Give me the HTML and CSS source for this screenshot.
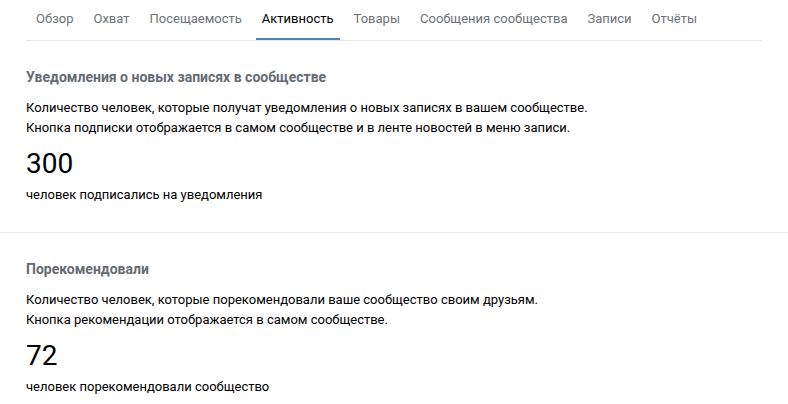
FILE: index.html
```html
<!DOCTYPE html>
<html>
<head>
<meta charset="UTF-8">
<title>Статистика сообщества</title>
<link rel="stylesheet" href="styles.css">
</head>
<body>
<div class="stats">
	<ul class="stats-tabs">
		<li class="stats-tab">Обзор</li>
		<li class="stats-tab">Охват</li>
		<li class="stats-tab">Посещаемость</li>
		<li class="stats-tab stats-tab_active">Активность</li>
		<li class="stats-tab">Товары</li>
		<li class="stats-tab">Сообщения сообщества</li>
		<li class="stats-tab">Записи</li>
		<li class="stats-tab">Отчёты</li>
	</ul>

	<div class="stats-block">
		<h2 class="stats-block-title">Уведомления о новых записях в сообществе</h2>
		<p class="stats-block-desc">Количество человек, которые получат уведомления о новых записях в вашем сообществе.<br>Кнопка подписки отображается в самом сообществе и в ленте новостей в меню записи.</p>
		<p class="stats-block-num">300</p>
		<p class="stats-block-caption">человек подписались на уведомления</p>
	</div>

	<div class="stats-block">
		<h2 class="stats-block-title">Порекомендовали</h2>
		<p class="stats-block-desc">Количество человек, которые порекомендовали ваше сообщество своим друзьям.<br>Кнопка рекомендации отображается в самом сообществе.</p>
		<p class="stats-block-num">72</p>
		<p class="stats-block-caption">человек порекомендовали сообщество</p>
	</div>
</div>
</body>
</html>
```

FILE: styles.css
```css
*{
	padding: 0;
	margin: 0;
}
body {
	background: #fff;
	font-family: Roboto, "Open Sans", sans-serif;
	font-size: 13px;
	color: #000;
}
.stats-tabs {
	list-style: none;
	display: flex;
	gap: 8px;
	height: 40px;
	margin: 0 26px;
	padding-left: 4px;
	border-bottom: 1px solid #e3e4e8;
}
.stats-tab {
	height: 38px;
	line-height: 38px;
	padding: 0 6px;
	color: #6d7277;
	border-bottom: 2px solid transparent;
	white-space: nowrap;
}
.stats-tab_active {
	color: #000;
	border-bottom-color: #5181b8;
}
.stats-block {
	padding: 27px 26px 27px;
	border-bottom: 1px solid #e3e4e8;
}
.stats-block-title {
	font-size: 14px;
	font-weight: bold;
	line-height: 18px;
	color: #656b73;
	margin-bottom: 12px;
}
.stats-block-desc {
	line-height: 20px;
}
.stats-block-num {
	font-size: 28px;
	line-height: 34px;
	margin-top: 9px;
}
.stats-block-caption {
	line-height: 20px;
	margin-top: 4px;
}
```
